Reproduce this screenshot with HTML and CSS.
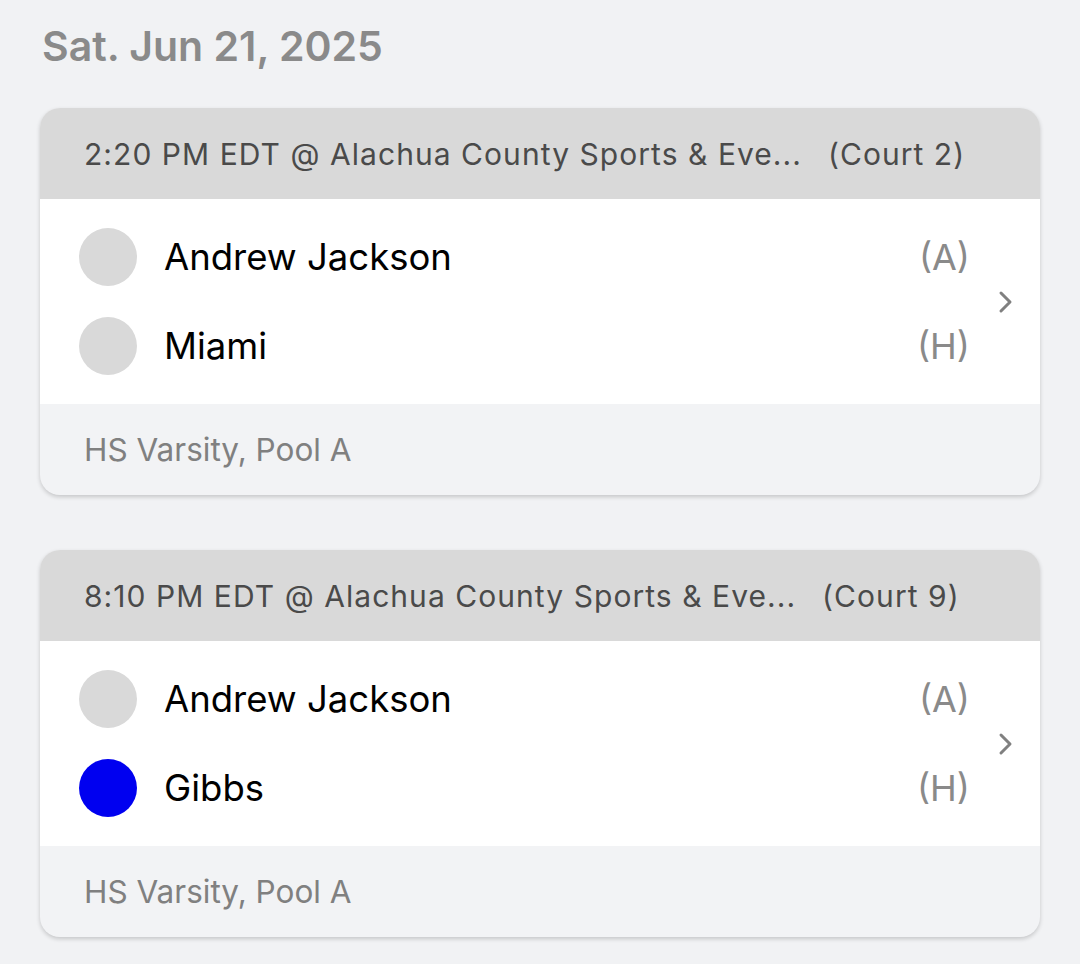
FILE: index.html
```html
<!DOCTYPE html>
<html lang="en">
<head>
    <meta charset="UTF-8">
    <meta name="viewport" content="width=device-width, initial-scale=1.0">
    <title>Schedule</title>
    <link rel="stylesheet" href="styles.css">
</head>
<body>
    <div class="schedule">
        <h2 class="day-title">Sat. Jun 21, 2025</h2>

        <div class="match-card">
            <div class="match-header">
                <span class="venue">2:20 PM EDT @ Alachua County Sports &amp; Eve...</span>
                <span class="court">(Court 2)</span>
            </div>
            <div class="match-body">
                <div class="teams">
                    <div class="team-row">
                        <span class="team-dot"></span>
                        <span class="team-name">Andrew Jackson</span>
                        <span class="team-side">(A)</span>
                    </div>
                    <div class="team-row">
                        <span class="team-dot"></span>
                        <span class="team-name">Miami</span>
                        <span class="team-side">(H)</span>
                    </div>
                </div>
                <svg class="chevron" width="16" height="24" viewBox="0 0 16 24">
                    <path d="M3 3 L12 12 L3 21" fill="none" stroke="#808080" stroke-width="3" stroke-linecap="round" stroke-linejoin="round"/>
                </svg>
            </div>
            <div class="match-footer">HS Varsity, Pool A</div>
        </div>

        <div class="match-card">
            <div class="match-header">
                <span class="venue">8:10 PM EDT @ Alachua County Sports &amp; Eve...</span>
                <span class="court">(Court 9)</span>
            </div>
            <div class="match-body">
                <div class="teams">
                    <div class="team-row">
                        <span class="team-dot"></span>
                        <span class="team-name">Andrew Jackson</span>
                        <span class="team-side">(A)</span>
                    </div>
                    <div class="team-row">
                        <span class="team-dot blue"></span>
                        <span class="team-name">Gibbs</span>
                        <span class="team-side">(H)</span>
                    </div>
                </div>
                <svg class="chevron" width="16" height="24" viewBox="0 0 16 24">
                    <path d="M3 3 L12 12 L3 21" fill="none" stroke="#808080" stroke-width="3" stroke-linecap="round" stroke-linejoin="round"/>
                </svg>
            </div>
            <div class="match-footer">HS Varsity, Pool A</div>
        </div>
    </div>
</body>
</html>
```

FILE: styles.css
```css
* {
    margin: 0;
    padding: 0;
    box-sizing: border-box;
}

body {
    font-family: 'Inter', 'Roboto', sans-serif;
    background: #f1f2f4;
    color: #000;
}

.schedule {
    padding: 22px 40px 20px 40px;
}

.day-title {
    color: #8a8a8a;
    font-size: 41px;
    font-weight: 600;
    line-height: 48px;
    padding-left: 2px;
    margin-bottom: 38px;
}

.match-card {
    background: #f2f3f5;
    border-radius: 20px;
    box-shadow: 0 2px 4px rgba(0, 0, 0, 0.18);
    overflow: hidden;
    margin-bottom: 55px;
}

.match-header {
    background: #d9d9d9;
    height: 91px;
    display: flex;
    align-items: center;
    padding-left: 44px;
    color: #4a4a4a;
    font-size: 30px;
    letter-spacing: 1.05px;
    gap: 26px;
}

.match-body {
    background: #fff;
    height: 205px;
    display: flex;
    align-items: center;
    padding: 0 26px 0 39px;
}

.teams {
    flex: 1;
    display: flex;
    flex-direction: column;
    gap: 31px;
}

.team-row {
    display: flex;
    align-items: center;
    height: 58px;
}

.team-dot {
    width: 58px;
    height: 58px;
    border-radius: 50%;
    background: #d9d9d9;
    margin-right: 27px;
}

.team-dot.blue {
    background: #0000f0;
}

.team-name {
    flex: 1;
    font-size: 36.5px;
}

.team-side {
    color: #8a8a8a;
    font-size: 36px;
    margin-right: 28px;
}

.chevron {
    display: block;
}

.match-footer {
    height: 91px;
    display: flex;
    align-items: center;
    padding-left: 44px;
    color: #808080;
    font-size: 31.5px;
}
```
